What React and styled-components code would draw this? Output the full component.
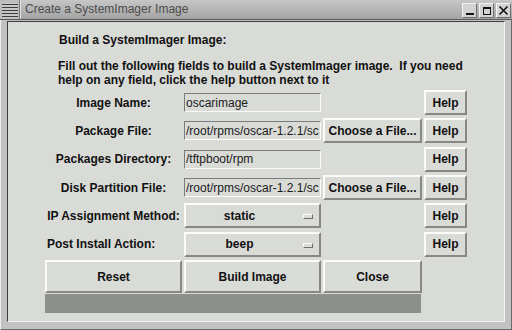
import React from "react";
import styled, { createGlobalStyle } from "styled-components";

const GlobalStyle = createGlobalStyle`
  html, body {
    margin: 0;
    padding: 0;
    background: #c4c4c4;
  }
  * {
    box-sizing: border-box;
  }
`;

const rows = [
  { label: "Image Name:", kind: "entry", value: "oscarimage" },
  { label: "Package File:", kind: "entry", value: "/root/rpms/oscar-1.2.1/scripts/sample.rpmlist", choose: true },
  { label: "Packages Directory:", kind: "entry", value: "/tftpboot/rpm" },
  { label: "Disk Partition File:", kind: "entry", value: "/root/rpms/oscar-1.2.1/scripts/sample.disk", choose: true },
  { label: "IP Assignment Method:", kind: "menu", value: "static" },
  { label: "Post Install Action:", kind: "menu", value: "beep", align: "start" },
];

function App() {
  return (
    <>
      <GlobalStyle />
      <Window>
        <TitleBar>
          <MenuIcon />
          <Title>Create a SystemImager Image</Title>
          <Controls>
            <CtrlButton>
              <svg width="10" height="10" viewBox="0 0 10 10">
                <rect x="1" y="7" width="8" height="2" fill="#111" />
              </svg>
            </CtrlButton>
            <CtrlButton>
              <svg width="10" height="10" viewBox="0 0 10 10">
                <rect x="1.5" y="1.5" width="7" height="7" fill="none" stroke="#111" strokeWidth="1" />
                <rect x="1" y="1" width="8" height="2" fill="#111" />
              </svg>
            </CtrlButton>
            <CtrlButton>
              <svg width="11" height="11" viewBox="0 0 11 11">
                <path d="M1.5 1.5 L9.5 9.5 M9.5 1.5 L1.5 9.5" stroke="#111" strokeWidth="1.6" />
              </svg>
            </CtrlButton>
          </Controls>
        </TitleBar>
        <Frame>
          <Body>
            <Heading>Build a SystemImager Image:</Heading>
            <Intro>
              Fill out the following fields to build a SystemImager image.&nbsp; If you need
              <br />
              help on any field, click the help button next to it
            </Intro>
            <Form>
              {rows.map((r) => (
                <React.Fragment key={r.label}>
                  <Label $align={r.align}>{r.label}</Label>
                  {r.kind === "entry" ? (
                    <Entry readOnly value={r.value} />
                  ) : (
                    <MenuButton>
                      {r.value}
                      <Indicator />
                    </MenuButton>
                  )}
                  {r.choose ? <Button>Choose a File...</Button> : <span />}
                  <Button>Help</Button>
                </React.Fragment>
              ))}
              <Button $tall>Reset</Button>
              <Button $tall>Build Image</Button>
              <Button $tall>Close</Button>
            </Form>
            <Progress />
          </Body>
        </Frame>
      </Window>
    </>
  );
}

const Window = styled.div`
  width: 512px;
  height: 330px;
  display: flex;
  flex-direction: column;
  background: #c2c2c2;
  font-family: "Liberation Sans", Arial, sans-serif;
`;

const TitleBar = styled.div`
  height: 20px;
  display: flex;
  align-items: stretch;
  background: linear-gradient(#c6c6c6, #a4a4a4);
  border-bottom: 1px solid #5a5a5a;
`;

const MenuIcon = styled.div`
  width: 20px;
  border-right: 1px solid #7a7a7a;
  background: repeating-linear-gradient(
    #c8c8c8 0px,
    #c8c8c8 1px,
    #3c3c3c 1px,
    #3c3c3c 2px,
    #c8c8c8 2px,
    #c8c8c8 3px
  );
  background-size: 16px 15px;
  background-repeat: no-repeat;
  background-position: 2px 3px;
  background-color: #bcbcbc;
`;

const Title = styled.div`
  flex: 1;
  padding-left: 4px;
  font-size: 12px;
  line-height: 19px;
  color: #4c4c4c;
  border-left: 1px solid #e0e0e0;
`;

const Controls = styled.div`
  display: flex;
  gap: 2px;
  padding: 3px 1px 2px 0;
`;

const CtrlButton = styled.div`
  width: 15px;
  height: 15px;
  display: flex;
  align-items: center;
  justify-content: center;
  background: #d2d2d2;
  border: 1px solid;
  border-color: #f2f2f2 #6e6e6e #6e6e6e #f2f2f2;
`;

const Frame = styled.div`
  flex: 1;
  display: flex;
  padding: 1px 6px 7px 6px;
  border-left: 1px solid #eeeeee;
  border-right: 1px solid #6a6a6a;
  border-bottom: 1px solid #6a6a6a;
`;

const Body = styled.div`
  flex: 1;
  background: #d9dbd7;
  border: 1px solid;
  border-color: #3e3e3e #f4f4f4 #f4f4f4 #3e3e3e;
  padding: 11px 0 0 37px;
  display: flex;
  flex-direction: column;
  align-items: flex-start;
`;

const Heading = styled.div`
  margin-left: 14px;
  font-size: 12px;
  font-weight: bold;
  line-height: 14px;
  color: #111;
`;

const Intro = styled(Heading)`
  margin-left: 13px;
  margin-top: 12px;
`;

const Form = styled.div`
  margin-top: 3px;
  display: grid;
  grid-template-columns: 137px 137px 99px 43px;
  grid-template-rows: repeat(6, 25px) 33px;
  column-gap: 2px;
  row-gap: 3.35px;
`;

const Label = styled.div`
  display: flex;
  align-items: center;
  justify-content: ${(p) => (p.$align === "start" ? "flex-start" : "center")};
  padding-left: ${(p) => (p.$align === "start" ? "2px" : "0")};
  font-size: 12px;
  font-weight: bold;
  color: #111;
  white-space: nowrap;
`;

const Entry = styled.input`
  align-self: center;
  width: 137px;
  height: 19px;
  margin: 0;
  padding: 0 1px;
  font-family: "Liberation Sans", Arial, sans-serif;
  font-size: 12px;
  color: #1a1a1a;
  background: #d9dbd7;
  border: 1px solid;
  border-color: #7c7c7c #fafafa #fafafa #7c7c7c;
  outline: none;
`;

const Button = styled.div`
  display: flex;
  align-items: center;
  justify-content: center;
  height: ${(p) => (p.$tall ? "33px" : "25px")};
  background: #d9dbd7;
  border: 2px solid;
  border-color: #fbfbfb #878787 #878787 #fbfbfb;
  font-size: 12px;
  font-weight: bold;
  color: #111;
  white-space: nowrap;
`;

const MenuButton = styled(Button)`
  position: relative;
  padding-right: 26px;
`;

const Indicator = styled.span`
  position: absolute;
  right: 6px;
  top: 9px;
  width: 10px;
  height: 5px;
  background: #d9dbd7;
  border: 1px solid;
  border-color: #fbfbfb #6e6e6e #6e6e6e #fbfbfb;
`;

const Progress = styled.div`
  width: 376px;
  height: 19px;
  margin-top: 1px;
  background: #8c8f8a;
`;

export default App;
